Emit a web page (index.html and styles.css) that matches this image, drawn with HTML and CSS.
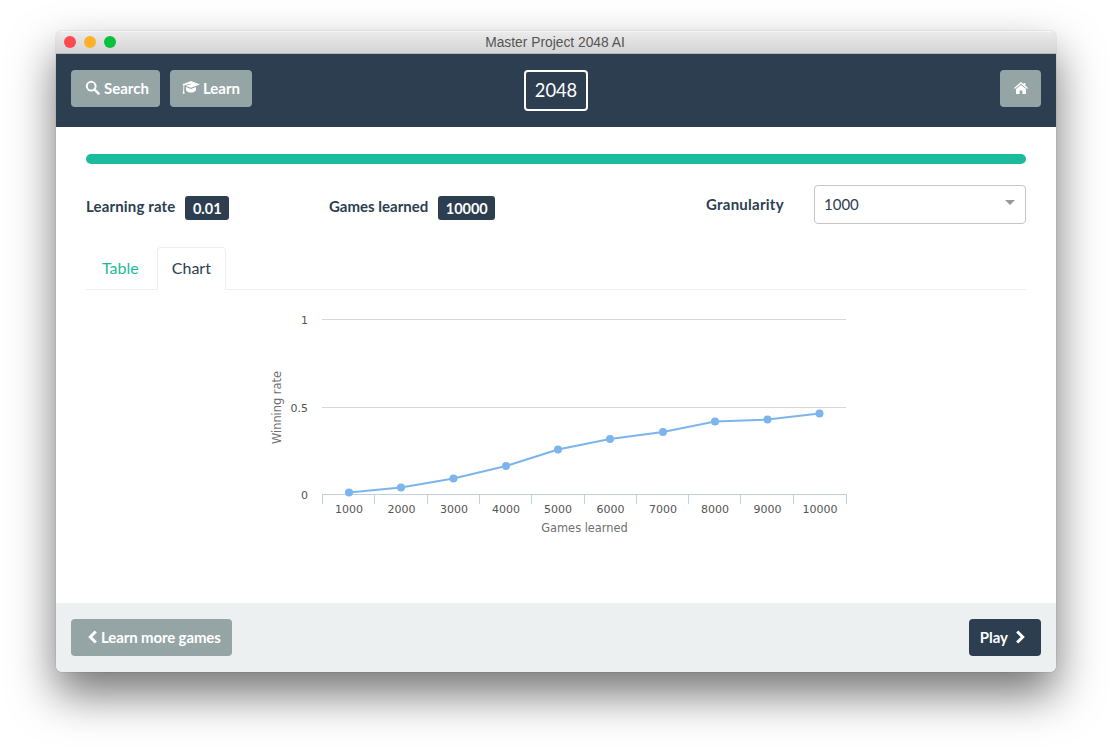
FILE: index.html
```html
<!DOCTYPE html>
<html lang="en">
<head>
    <meta charset="UTF-8">
    <title>Master Project 2048 AI</title>
    <link rel="stylesheet" href="styles.css">
</head>
<body>

    <div class="window">

        <div class="titlebar">
            <div class="lights">
                <span class="light red"></span>
                <span class="light yellow"></span>
                <span class="light green"></span>
            </div>
            <div class="title">Master Project 2048 AI</div>
        </div>

        <div class="navbar">
            <div class="nav-left">
                <a class="btn btn-grey">
                    <svg class="icon" width="15" height="15" viewBox="0 0 15 15"><circle cx="6.2" cy="6.2" r="4.4" fill="none" stroke="#fff" stroke-width="2"/><path d="M9.6 9.6 13.6 13.6" stroke="#fff" stroke-width="2.4" stroke-linecap="round"/></svg>
                    Search
                </a>
                <a class="btn btn-grey btn-learn">
                    <svg class="icon" width="18" height="15" viewBox="0 0 18 15"><path d="M9 1 18 4.4 9 7.8 3.4 5.7 8.8 4.3 8.5 3.8 2.3 5.3 2.1 10.6 2.7 13.8 0.6 13.8 1.3 10.6 1.4 5 0 4.4Z" fill="#fff"/><path d="M4 7 9 8.9 14 7 14 10.3C13 11.8 11 12.6 9 12.6 7 12.6 5 11.8 4 10.3Z" fill="#fff"/></svg>
                    Learn
                </a>
            </div>
            <div class="logo">2048</div>
            <div class="nav-right">
                <a class="btn btn-grey btn-home">
                    <svg width="14" height="12" viewBox="0 0 14 12"><path d="M7 0 9.6 2.2V1H11.4V3.7L14 6 13.2 6.9 7 1.7 0.8 6.9 0 6Z" fill="#fff"/><path d="M7 3 12 7.1V12H8.4V8.4H5.6V12H2V7.1Z" fill="#fff"/></svg>
                </a>
            </div>
        </div>

        <div class="content">
            <div class="progress"></div>

            <div class="stats">
                <div class="stat stat-rate">
                    <span class="label">Learning rate</span>
                    <span class="badge">0.01</span>
                </div>
                <div class="stat stat-games">
                    <span class="label">Games learned</span>
                    <span class="badge">10000</span>
                </div>
                <div class="stat stat-gran">
                    <span class="label">Granularity</span>
                    <div class="select">
                        1000
                        <span class="caret"></span>
                    </div>
                </div>
            </div>

            <ul class="tabs">
                <li class="tab">Table</li>
                <li class="tab active">Chart</li>
            </ul>

            <svg class="chart" width="940" height="250" viewBox="86 300 940 250">
                <path class="grid-line" d="M322 319.500H846M322 407.500H846"/>
                <path class="axis-line" d="M322 494.500H846M322.500 494V504M374.500 494V504M427.500 494V504M479.500 494V504M531.500 494V504M584.500 494V504M636.500 494V504M688.500 494V504M740.500 494V504M793.500 494V504M846.500 494V504"/>

                <text class="tick" x="308" y="324" text-anchor="end">1</text>
                <text class="tick" x="308" y="412" text-anchor="end">0.5</text>
                <text class="tick" x="308" y="499" text-anchor="end">0</text>

                <text class="tick" x="349" y="513" text-anchor="middle">1000</text>
                <text class="tick" x="401.500" y="513" text-anchor="middle">2000</text>
                <text class="tick" x="454" y="513" text-anchor="middle">3000</text>
                <text class="tick" x="506" y="513" text-anchor="middle">4000</text>
                <text class="tick" x="558" y="513" text-anchor="middle">5000</text>
                <text class="tick" x="610.500" y="513" text-anchor="middle">6000</text>
                <text class="tick" x="663" y="513" text-anchor="middle">7000</text>
                <text class="tick" x="715" y="513" text-anchor="middle">8000</text>
                <text class="tick" x="767.500" y="513" text-anchor="middle">9000</text>
                <text class="tick" x="820" y="513" text-anchor="middle">10000</text>

                <text class="axis-title" x="584.500" y="532" text-anchor="middle">Games learned</text>
                <text class="axis-title" transform="translate(281 407.500) rotate(-90)" text-anchor="middle">Winning rate</text>

                <polyline class="series" points="349,492.500 401,487.500 453.500,478.500 506,466 558,449.500 610,439 663,432 715,421.500 767.500,419.500 819.500,413.500"/>
                <g class="dots">
                    <circle cx="349" cy="492.500" r="4"/>
                    <circle cx="401" cy="487.500" r="4"/>
                    <circle cx="453.500" cy="478.500" r="4"/>
                    <circle cx="506" cy="466" r="4"/>
                    <circle cx="558" cy="449.500" r="4"/>
                    <circle cx="610" cy="439" r="4"/>
                    <circle cx="663" cy="432" r="4"/>
                    <circle cx="715" cy="421.500" r="4"/>
                    <circle cx="767.500" cy="419.500" r="4"/>
                    <circle cx="819.500" cy="413.500" r="4"/>
                </g>
            </svg>
        </div>

        <div class="footer">
            <a class="btn btn-grey btn-back">
                <svg width="10" height="14" viewBox="0 0 10 14"><path d="M7.800 1.500 2.300 7 7.800 12.500" fill="none" stroke="#fff" stroke-width="3"/></svg>
                Learn more games
            </a>
            <a class="btn btn-dark">
                Play
                <svg width="10" height="14" viewBox="0 0 10 14"><path d="M2.200 1.500 7.700 7 2.200 12.500" fill="none" stroke="#fff" stroke-width="3"/></svg>
            </a>
        </div>

    </div>

</body>
</html>
```

FILE: styles.css
```css
* {
    margin: 0px;
    padding: 0px;
    box-sizing: border-box;
}
html, body {
    width: 100%;
    height: 100%;
    overflow: hidden;
    background-color: #ffffff;
}
body {
    padding: 31px 56px 0;
    font-family: Lato, "Open Sans", sans-serif;
    font-size: 15px;
    color: #2c3e50;
}
ul {
    list-style-type: none;
}
.window {
    width: 1000px;
    height: 641px;
    border-radius: 6px;
    overflow: hidden;
    display: flex;
    flex-direction: column;
    box-shadow: 0 0 1px rgba(0, 0, 0, 0.5), 0 22px 45px rgba(0, 0, 0, 0.55);
}
.titlebar {
    height: 23px;
    display: grid;
    grid-template-columns: 1fr auto 1fr;
    align-items: center;
    background: linear-gradient(#ececec, #d4d4d4);
    border-bottom: 1px solid #b4b4b4;
    box-shadow: inset 0 1px 0 #f6f6f6;
}
.lights {
    display: flex;
    gap: 8px;
    padding-left: 8px;
}
.light {
    width: 12px;
    height: 12px;
    border-radius: 50%;
}
.red {
    background-color: #fc4a4e;
}
.yellow {
    background-color: #fdb02c;
}
.green {
    background-color: #06c23c;
}
.title {
    padding-right: 2px;
    font-family: "Liberation Sans", sans-serif;
    font-size: 13.8px;
    color: #555555;
}
.navbar {
    height: 73px;
    padding: 16px 15px 0;
    display: grid;
    grid-template-columns: 1fr auto 1fr;
    align-items: start;
    background-color: #2c3e50;
}
.nav-left {
    display: flex;
    gap: 10px;
}
.nav-right {
    display: flex;
    justify-content: flex-end;
}
.btn {
    height: 37px;
    padding: 0 11px 2px 14px;
    display: flex;
    align-items: center;
    gap: 4px;
    border-radius: 4px;
    font-weight: 700;
    font-size: 15px;
    color: #ffffff;
}
.btn-grey {
    background-color: #95a5a6;
}
.btn-learn {
    padding: 0 12px 2px;
    gap: 3px;
}
.btn-dark {
    background-color: #2c3e50;
    padding: 0 16px 2px 11px;
    gap: 7px;
}
.btn-home {
    width: 41px;
    padding: 0 0 2px;
    justify-content: center;
}
.btn-back {
    padding: 0 11px 2px 17px;
    gap: 3px;
    letter-spacing: -0.12px;
}
.logo {
    width: 64px;
    height: 41px;
    padding-bottom: 2px;
    border: 2px solid #ffffff;
    border-radius: 4px;
    display: flex;
    align-items: center;
    justify-content: center;
    font-size: 18.3px;
    color: #ffffff;
}
.content {
    flex: 1;
    padding: 27px 30px 0;
    background-color: #ffffff;
}
.progress {
    height: 10px;
    border-radius: 5px;
    background-color: #1abc9c;
}
.stats {
    height: 39px;
    margin-top: 21px;
    display: grid;
    grid-template-columns: 243px 377px 1fr;
}
.stat {
    display: flex;
    align-items: center;
    gap: 10px;
}
.stat-rate, .stat-games {
    align-items: flex-start;
    padding-top: 11px;
}
.stat-rate .label {
    letter-spacing: 0.15px;
}
.stat-gran {
    padding-bottom: 2px;
    justify-content: space-between;
}
.stat-gran .label {
    letter-spacing: 0.25px;
}
.label {
    font-weight: 700;
    line-height: 20px;
}
.badge {
    height: 24px;
    padding: 0 7.5px;
    display: flex;
    align-items: center;
    border-radius: 3px;
    background-color: #2c3e50;
    color: #ffffff;
    font-weight: 700;
    font-size: 14.5px;
}
.select {
    width: 212px;
    height: 39px;
    padding: 0 0 2px 9px;
    display: flex;
    align-items: center;
    justify-content: space-between;
    border: 1px solid #c5c5c5;
    border-radius: 4px;
    font-size: 15px;
    margin-bottom: -2px;
}
.caret {
    width: 0;
    height: 0;
    margin: 0 10px 3px 0;
    border-left: 5px solid transparent;
    border-right: 5px solid transparent;
    border-top: 5px solid #999999;
}
.tabs {
    height: 43px;
    margin-top: 23px;
    display: flex;
    border-bottom: 1px solid #eeeeee;
}
.tab {
    height: 43px;
    padding: 0 15px 2px;
    display: flex;
    align-items: center;
    font-size: 16px;
    color: #1abc9c;
    border: 1px solid transparent;
    border-radius: 4px 4px 0 0;
}
.tab.active {
    color: #2c3e50;
    background-color: #ffffff;
    border-color: #eeeeee #eeeeee #ffffff;
    padding: 0 14px 2px;
    margin-left: 2px;
}
.chart {
    display: block;
    margin-top: 10px;
}
.grid-line {
    fill: none;
    stroke: #d8d8d8;
    stroke-width: 1;
}
.axis-line {
    fill: none;
    stroke: #c0d0e0;
    stroke-width: 1;
}
.tick {
    font-family: "DejaVu Sans", sans-serif;
    font-size: 11px;
    fill: #555555;
}
.axis-title {
    font-family: "DejaVu Sans", sans-serif;
    font-size: 11.4px;
    fill: #707070;
}
.series {
    fill: none;
    stroke: #7cb5ec;
    stroke-width: 2;
}
.dots {
    fill: #7cb5ec;
}
.footer {
    height: 69px;
    padding: 16px 15px 0;
    display: flex;
    justify-content: space-between;
    align-items: flex-start;
    background-color: #ecf0f1;
}
```
